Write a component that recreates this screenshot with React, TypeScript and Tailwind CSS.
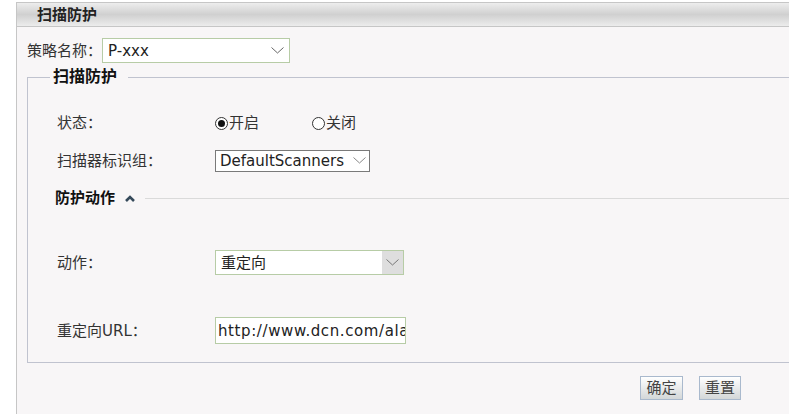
import React from 'react'

const font = "font-['DejaVu_Sans','Noto_Sans_CJK_SC',sans-serif]"

function Chevron({ className = '' }: { className?: string }) {
  return (
    <svg width="13" height="7" viewBox="0 0 13 7" className={className} aria-hidden="true">
      <polyline points="0.5,0.5 6.5,6 12.5,0.5" fill="none" stroke="currentColor" strokeWidth="1" />
    </svg>
  )
}

function Radio({ checked, label }: { checked: boolean; label: string }) {
  return (
    <label className="flex items-center">
      <span className="flex h-[13px] w-[13px] items-center justify-center rounded-full border border-[#333] bg-white">
        {checked && <span className="h-[7px] w-[7px] rounded-full bg-[#111]" />}
      </span>
      <span className="ml-px text-[#333]">{label}</span>
    </label>
  )
}

function Row({ label, className = '', children }: { label: string; className?: string; children: React.ReactNode }) {
  return (
    <div className={`flex items-center pl-[29px] ${className}`}>
      <span className="w-[158px] text-[#333]">{label}</span>
      {children}
    </div>
  )
}

export default function App() {
  return (
    <div className={`h-[414px] overflow-hidden bg-white pl-[16px] pt-[2px] text-[15px] leading-[18px] ${font}`}>
      <div className="h-full w-[830px] border-l border-t border-[#c6c6c6] bg-[#f8f6f7]">
        <div className="h-[24px] border-b border-[#c6c6c6] bg-linear-to-b from-[#ededed] via-[#d0d0d0] to-[#ececec] pl-[20px] text-[15px] font-bold leading-[24px] text-[#222]">
          扫描防护
        </div>

        <div className="mt-[11px] flex h-[25px] items-center pl-[10px]">
          <span className="w-[75px] text-[#333]">策略名称：</span>
          <div className="flex h-[25px] w-[188px] items-center justify-between border border-[#b7cca6] bg-white pl-[5px] pr-[5px] text-[#222]">
            <span>P-xxx</span>
            <Chevron className="text-[#666]" />
          </div>
        </div>

        <fieldset className="ml-[10px] mt-[5px] border border-[#c0c3cf] pb-[18px]">
          <legend className="ml-[22px] pl-[3px] pr-[11px] text-[16px] font-bold leading-[18px] text-[#111]">扫描防护</legend>

          <Row label="状态：" className="mt-[22px] h-[30px]">
            <div className="flex items-center gap-[53px]">
              <Radio checked label="开启" />
              <Radio checked={false} label="关闭" />
            </div>
          </Row>

          <Row label="扫描器标识组：" className="mt-[7px] h-[31px]">
            <div className="flex h-[22px] w-[155px] items-center justify-between border border-[#7a7a7a] bg-white pl-[4px] pr-[3px] text-[#222]">
              <span>DefaultScanners</span>
              <Chevron className="text-[#888]" />
            </div>
          </Row>

          <div className="mt-[12px] flex h-[20px] items-center pl-[27px]">
            <span className="text-[15px] font-bold text-[#111]">防护动作</span>
            <svg width="10" height="7" viewBox="0 0 10 7" className="ml-[10px] text-[#35495a]" aria-hidden="true">
              <polyline points="1,6 5,2 9,6" fill="none" stroke="currentColor" strokeWidth="2.6" />
            </svg>
            <span className="ml-[10px] h-px flex-1 bg-[#dadada]" />
          </div>

          <Row label="动作：" className="mt-[42px] h-[25px]">
            <div className="flex h-[25px] w-[189px] items-stretch justify-between border border-[#b7cca6] bg-white text-[#222]">
              <span className="flex items-center pl-[5px]">重定向</span>
              <span className="flex w-[21px] items-center justify-center bg-[#dedede]">
                <Chevron className="text-[#777]" />
              </span>
            </div>
          </Row>

          <Row label="重定向URL：" className="mt-[42px] h-[27px]">
            <input
              readOnly
              value="http://www.dcn.com/alarm.html"
              className="h-[27px] w-[191px] border border-[#b7cca6] bg-white pl-[2px] text-[15px] tracking-[0.6px] text-[#222] outline-none"
            />
          </Row>
        </fieldset>

        <div className="mt-[13px] flex gap-[16px] pl-[623px]">
          <button className="h-[24px] w-[43px] border border-[#a9b9cd] bg-linear-to-b from-white to-[#d3d7d8] text-[15px] leading-[22px] text-[#444]">
            确定
          </button>
          <button className="h-[24px] w-[42px] border border-[#a9b9cd] bg-linear-to-b from-white to-[#d3d7d8] text-[15px] leading-[22px] text-[#444]">
            重置
          </button>
        </div>
      </div>
    </div>
  )
}
